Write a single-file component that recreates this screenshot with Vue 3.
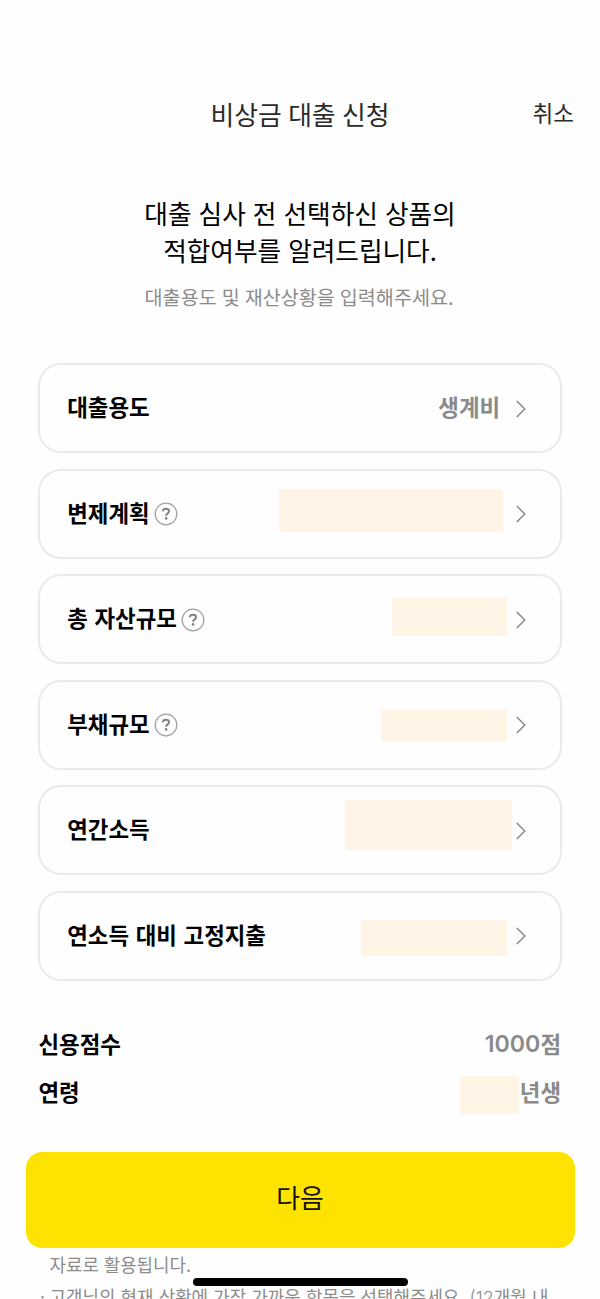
<script setup>
const rows = [
  { label: '대출용도', value: '생계비' },
  { label: '변제계획', help: true, mask: 'plan' },
  { label: '총 자산규모', help: true, mask: 'asset' },
  { label: '부채규모', help: true, mask: 'debt' },
  { label: '연간소득', mask: 'income' },
  { label: '연소득 대비 고정지출', mask: 'expense' },
]
</script>

<template>
  <div class="screen">
    <header class="bar">
      <h1>비상금 대출 신청</h1>
      <button class="cancel">취소</button>
    </header>
    <section class="intro">
      <h2>대출 심사 전 선택하신 상품의<br />적합여부를 알려드립니다.</h2>
      <p>대출용도 및 재산상황을 입력해주세요.</p>
    </section>
    <ul class="cards">
      <li v-for="row in rows" :key="row.label" class="card">
        <span class="label">{{ row.label }}</span>
        <svg v-if="row.help" class="help" viewBox="0 0 24 24" fill="none">
          <circle cx="12" cy="12" r="10.8" stroke="#a3a3a3" stroke-width="1.3" />
          <path d="M8.9 9.2C9 7.6 10.2 6.8 12 6.8s3 .9 3 2.4c0 1.2-.6 1.8-1.6 2.5-.9.6-1.3 1-1.3 2.1" stroke="#808080" stroke-width="2" />
          <circle cx="12.1" cy="16.4" r="1.3" fill="#808080" />
        </svg>
        <span class="value">{{ row.value }}</span>
        <svg class="chevron" viewBox="0 0 10 18" fill="none">
          <path d="M.8 1 8.8 9 .8 17" stroke="#858585" stroke-width="1.4" />
        </svg>
        <i v-if="row.mask" class="mask" :class="row.mask"></i>
      </li>
    </ul>
    <dl class="facts">
      <div><dt>신용점수</dt><dd><b>1000</b>점</dd></div>
      <div><dt>연령</dt><dd><i class="year"></i>년생</dd></div>
    </dl>
    <button class="next">다음</button>
    <div class="notes">
      <p>자료로 활용됩니다.</p>
      <p class="item"><span class="dot">·</span>고객님의 현재 상황에 가장 가까운 항목을 선택해주세요. <span class="num">(12</span>개월 내</p>
    </div>
    <div class="home"></div>
  </div>
</template>

<style>
html, body { background: #fefefe; overflow: hidden; }
</style>

<style scoped>
.screen {
  position: relative;
  box-sizing: border-box;
  width: 600px;
  height: 1299px;
  overflow: hidden;
  background: #fefefe;
  color: #000;
  font-family: "Noto Sans CJK KR", sans-serif;
}
h1, h2, p, ul, dl, dd { margin: 0; padding: 0; font-weight: 400; }
button { border: 0; padding: 0; background: none; font-family: inherit; color: inherit; }
.bar {
  display: grid;
  grid-template-columns: 1fr auto 1fr;
  align-items: center;
  height: 60px;
  padding: 84px 26px 0;
  color: #2b2b2b;
}
.bar h1 { grid-column: 2; font-size: 25.8px; line-height: 40px; word-spacing: 0.7px; }
.cancel { justify-self: end; margin-top: -4px; font-size: 22.5px; line-height: 36px; }
.intro { padding-top: 50px; text-align: center; }
.intro h2 { font-size: 25.7px; line-height: 37px; word-spacing: 1.4px; letter-spacing: -0.05px; }
.intro p { margin-top: 15px; padding-right: 2px; font-size: 19.6px; line-height: 28px; word-spacing: 0.6px; color: #8c8c8c; }
.cards {
  display: flex;
  flex-direction: column;
  gap: 15.6px;
  list-style: none;
  padding: 52px 38.5px 0 38.4px;
}
.card {
  position: relative;
  display: flex;
  align-items: center;
  box-sizing: border-box;
  height: 90px;
  padding: 0 33.4px 0 26.8px;
  border: 2px solid #eaeaea;
  border-radius: 23px;
}
.label { font-size: 22.4px; font-weight: 700; line-height: 34px; margin-top: -4px; word-spacing: 1.6px; }
.help { width: 24px; height: 24px; margin-left: 4.4px; margin-top: 1px; }
.value { margin-left: auto; margin-right: 16px; margin-top: -4px; font-size: 22.4px; font-weight: 700; line-height: 34px; color: #8a8a8a; }
.chevron { width: 10px; height: 18px; margin-top: 1px; }
.mask { position: absolute; background: #fff4e5; }
.plan { left: 238.6px; top: 18px; width: 224px; height: 43px; }
.asset { left: 351.6px; top: 22px; width: 115px; height: 38px; }
.debt { left: 340.6px; top: 28px; width: 126px; height: 32px; }
.income { left: 304.6px; top: 13px; width: 167px; height: 50px; }
.expense { left: 320.6px; top: 27px; width: 146px; height: 36px; }
.facts { padding: 38px 39px 0 38.5px; font-size: 22.4px; line-height: 48px; }
.facts div { display: flex; justify-content: space-between; height: 48px; }
.facts dt { font-weight: 700; }
.facts dd { display: flex; align-items: center; font-weight: 700; color: #8a8a8a; }
.facts b { padding-top: 2px; font-family: Inter, sans-serif; font-size: 23.2px; font-weight: 600; }
.year { width: 58.5px; height: 38px; margin-right: 1px; margin-top: 9px; background: #fff4e5; }
.next {
  display: block;
  width: 549px;
  height: 96px;
  margin: 37px 0 0 25.6px;
  padding-bottom: 6px;
  border-radius: 16px;
  background: #ffe300;
  color: #111;
  font-size: 25.8px;
}
.notes { padding: 0 0 0 49.5px; font-size: 17.9px; line-height: 32px; color: #8c8c8c; white-space: nowrap; }
.notes p:first-child { word-spacing: 0.8px; }
.item { display: flex; align-items: baseline; white-space: pre; word-spacing: 1.2px; }
.dot { width: 12px; margin-left: -12px; }
.num { font-family: Inter, sans-serif; font-weight: 300; }
.home { position: absolute; left: 193px; top: 1278px; width: 214.5px; height: 8px; border-radius: 4px; background: #000; }
</style>
